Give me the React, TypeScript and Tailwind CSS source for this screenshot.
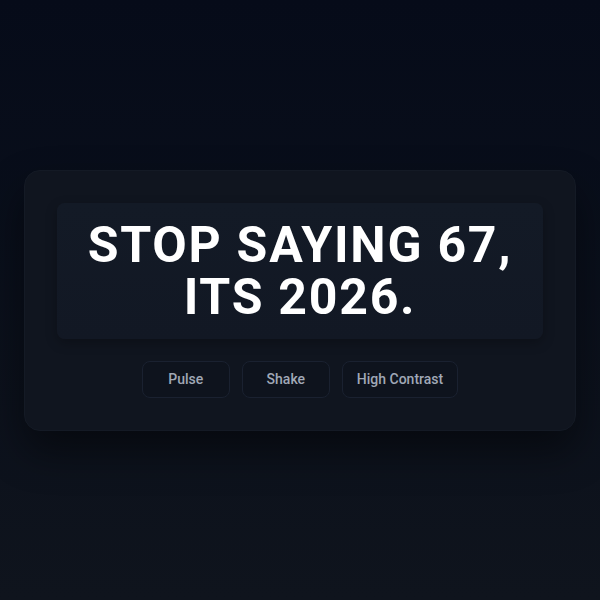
import { useState } from 'react';

const modes = ['Pulse', 'Shake', 'High Contrast'];

const App = () => {
	const [active, setActive] = useState<string | null>(null);

	return (
		<div
			className="min-h-[600px] w-full flex items-center justify-center bg-gradient-to-b from-[#060b19] to-[#0f141d] px-6"
			style={{ fontFamily: 'Roboto, "Noto Sans", sans-serif' }}
		>
			<div className="w-full rounded-2xl bg-[#10151f] p-8 shadow-[0_20px_40px_rgba(0,0,0,0.45)] border border-[#141a25]">
				{/* Headline */}
				<div className="rounded-lg bg-gradient-to-b from-[#131a26] to-[#121824] px-4 py-4 shadow-[0_4px_12px_rgba(0,0,0,0.25)]">
					<h1 className="flex flex-col items-center text-center text-[50px] font-bold tracking-[0.035em] text-white">
						<span className="block h-[52px] leading-[52px]">STOP SAYING 67,</span>
						<span className="block h-[52px] leading-[52px]">ITS 2026.</span>
					</h1>
				</div>

				{/* Controls */}
				<div className="mt-[22px] flex justify-center gap-3">
					{modes.map(mode => (
						<button
							key={mode}
							onClick={() => setActive(active === mode ? null : mode)}
							className="min-w-[88px] h-[37px] rounded-lg border border-[#1a2130] bg-[#0e131d] px-[14px] text-[14px] font-medium text-[#a0a8b6]"
						>
							{mode}
						</button>
					))}
				</div>
			</div>
		</div>
	);
};

export default App;
